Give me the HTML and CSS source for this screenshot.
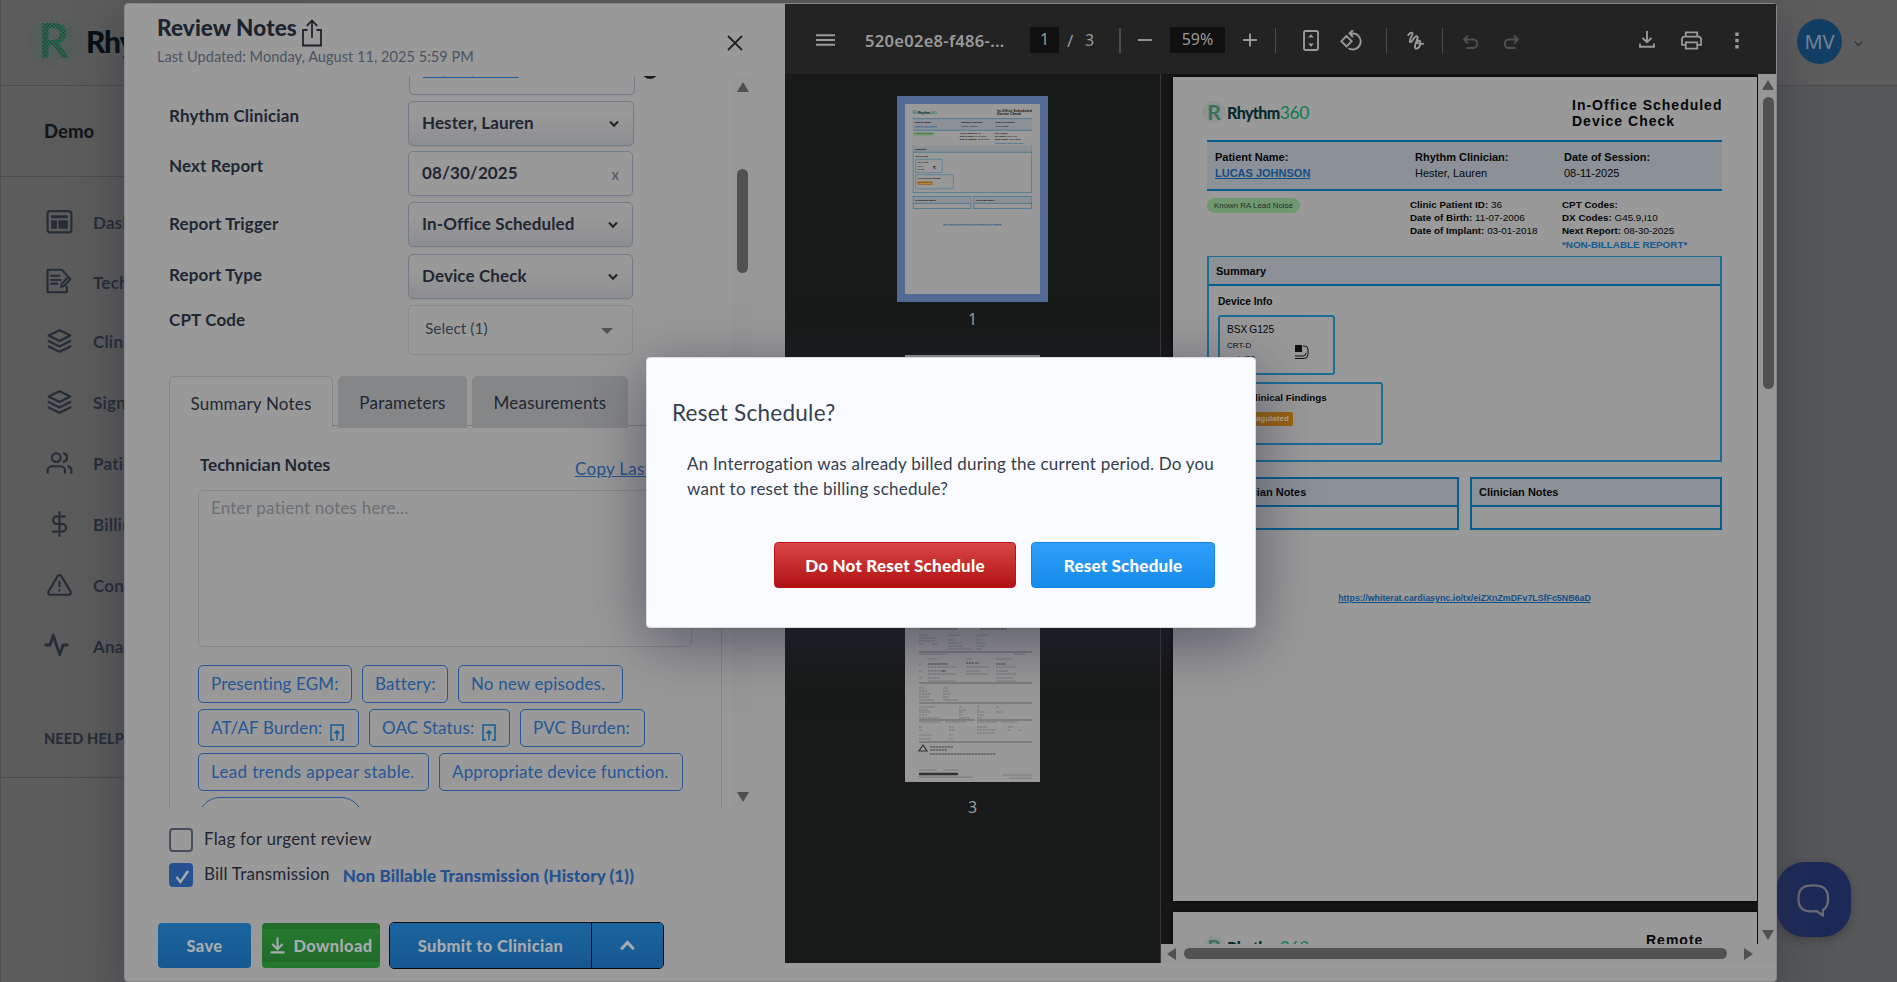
FILE: index.html
```html
<!DOCTYPE html>
<html lang="en">
<head>
<meta charset="utf-8">
<title>Rhythm360 – Review Notes</title>
<link rel="stylesheet" href="styles.css">
</head>
<body>
<svg width="0" height="0" class="defs" aria-hidden="true">
  <defs>
    <pattern id="dotsBig" width="3.6" height="3.6" patternUnits="userSpaceOnUse"><circle cx=".9" cy=".9" r="1.15" fill="#06583a"/><circle cx="2.7" cy="2.7" r="1.15" fill="#06583a"/></pattern>
    <pattern id="dotsSmall" width="4.6" height="4.6" patternUnits="userSpaceOnUse"><circle cx="1.1" cy="1.1" r=".7" fill="#1e5f45"/><circle cx="3.4" cy="3.4" r=".7" fill="#1e5f45"/></pattern>
    <symbol id="mark" viewBox="0 0 54 54">
      <circle cx="27" cy="27" r="26" fill="url(#dotsSmall)" opacity=".75"/>
      <text x="12" y="44" class="mark-r" fill="url(#dotsBig)">R</text>
    </symbol>
    <symbol id="layers" viewBox="0 0 24 24"><path d="M12 2 2 7l10 5 10-5zM2 12l10 5 10-5M2 17l10 5 10-5"/></symbol>
    <symbol id="chev" viewBox="0 0 12 8"><path d="M2 1.5l4 4.2 4-4.2"/></symbol>
    <symbol id="upbox" viewBox="0 0 14 17"><path d="M4 16H1V1h12v15h-3M7 16V7M4.600 9.400 7 7l2.400 2.400"/></symbol>
  </defs>
</svg>

<div class="app">
  <aside class="side">
    <div class="brand"><svg class="brand-mark"><use href="#mark"/></svg><span>Rhythm360</span></div>
    <div class="org">Demo</div>
    <nav class="nav">
      <div class="item"><svg viewBox="0 0 26 24"><rect x="1.500" y="1.500" width="23" height="20.500" rx="2.500"/><path class="solid" d="M5 5.500h16v2.800H5zM5 10.300h5.500v8.200H5zM12 10.300h9v8.200h-9z"/></svg>Dashboard</div>
      <div class="item i2"><svg viewBox="0 0 26 24"><path d="M20 17.500V22.800H1.500V1.200H15l5 5M5 7h8M5 11h9M5 14.500h6M15 15l6.500-7 2 2-6.500 7-2.500.500z"/></svg>Technicians</div>
      <div class="item"><svg viewBox="0 0 24 24"><use href="#layers"/></svg>Clinics</div>
      <div class="item"><svg viewBox="0 0 24 24"><use href="#layers"/></svg>Signed</div>
      <div class="item"><svg viewBox="0 0 24 24"><path d="M17 21v-2a4 4 0 0 0-4-4H5a4 4 0 0 0-4 4v2M23 21v-2a4 4 0 0 0-3-3.870M16 3.130a4 4 0 0 1 0 7.750"/><circle cx="9" cy="7" r="4"/></svg>Patients</div>
      <div class="item"><svg viewBox="0 0 24 24"><path d="M12 1v22M17 5H9.500a3.500 3.500 0 0 0 0 7h5a3.500 3.500 0 0 1 0 7H6"/></svg>Billing</div>
      <div class="item"><svg viewBox="0 0 24 24"><path d="M10.290 3.860 1.820 18a2 2 0 0 0 1.710 3h16.940a2 2 0 0 0 1.710-3L13.710 3.860a2 2 0 0 0-3.420 0zM12 9v4M12 17h.01"/></svg>Connectivity</div>
      <div class="item pulse"><svg viewBox="0 0 24 24"><path d="M22 12h-4l-3 9L9 3l-3 9H2"/></svg>Analytics</div>
    </nav>
    <div class="help">NEED HELP?</div>
  </aside>
  <main class="main">
    <header class="top"><span class="avatar">MV</span><svg class="top-chev" viewBox="0 0 12 8"><use href="#chev"/></svg></header>
  </main>
</div>

<div class="fab"><svg viewBox="0 0 34 34"><path d="M16.500 1.500C27 1.500 32 5 32 15c0 6.500-2 10-5 11.500l-.500 6-6-4.500c-14.500 1-19-3-19-12.500C1.500 5 6 1.500 16.500 1.500z"/></svg></div>

<section class="review">
  <div class="notes">
    <header class="notes-head">
      <div class="headline"><h1>Review Notes</h1><svg viewBox="0 0 20 28"><path d="M5.500 11H1v15.500h18V11h-4.500M10 19V1.500M4.800 6.800 10 1.500l5.200 5.300"/></svg></div>
      <p>Last Updated: Monday, August 11, 2025 5:59 PM</p>
      <svg class="close" viewBox="0 0 16 16"><path d="M1 1l14 14M15 1 1 15"/></svg>
    </header>
    <div class="scroll">
      <div class="form">
        <div class="row r0"><label></label><div class="field"><a>08/11/2025</a></div><span class="dot"></span></div>
        <div class="row r1"><label>Rhythm Clinician</label><div class="field sel">Hester, Lauren<svg><use href="#chev"/></svg></div></div>
        <div class="row r2"><label>Next Report</label><div class="field date">08/30/2025<i>x</i></div></div>
        <div class="row r3"><label>Report Trigger</label><div class="field sel">In-Office Scheduled<svg><use href="#chev"/></svg></div></div>
        <div class="row r4"><label>Report Type</label><div class="field sel dc">Device Check<svg><use href="#chev"/></svg></div></div>
        <div class="row r5"><label>CPT Code</label><div class="field multi">Select (1)<b></b></div></div>
        <div class="tabs"><span class="tab on">Summary Notes</span><span class="tab t2">Parameters</span><span class="tab t3">Measurements</span></div>
        <div class="panel">
          <div class="panel-head"><h2>Technician Notes</h2><a>Copy Last Note</a></div>
          <div class="area">Enter patient notes here...</div>
          <div class="chips"><span style="width:154px">Presenting EGM:</span><span style="width:86px">Battery:</span><span style="width:165px">No new episodes.</span></div>
          <div class="chips"><span style="width:161px">AT/AF Burden:<svg><use href="#upbox"/></svg></span><span style="width:141px">OAC Status:<svg><use href="#upbox"/></svg></span><span style="width:125px">PVC Burden:</span></div>
          <div class="chips"><span class="wide" style="width:231px">Lead trends appear stable.</span><span style="width:244px">Appropriate device function.</span></div>
          <div class="chips"><span class="pill"></span></div>
        </div>
      </div>
      <div class="bar"><i class="up"></i><i class="thumb"></i><i class="down"></i></div>
    </div>
    <footer class="foot">
      <div class="check"><i class="box"></i><span class="flag">Flag for urgent review</span></div>
      <div class="check c2"><i class="box ticked"><svg viewBox="0 0 24 24"><path d="M7.500 14l4 5L19 8"/></svg></i><span class="bill">Bill Transmission</span><a>Non Billable Transmission (History (1))</a></div>
      <div class="actions">
        <button class="btn save">Save</button>
        <button class="btn down"><svg viewBox="0 0 16 17"><path d="M8 0v12M2.500 7 8 12.500 13.500 7M.500 15.800h15"/></svg>Download</button>
        <div class="split"><button class="btn">Submit to Clinician</button><button class="btn more"><svg viewBox="0 0 16 10"><path d="M2 8.500 8 2.200l6 6.300"/></svg></button></div>
      </div>
    </footer>
  </div>

  <div class="pdf">
    <div class="tools">
      <svg class="g ham" viewBox="0 0 20 12"><path d="M0 1h20M0 6h20M0 11h20"/></svg>
      <span class="file">520e02e8-f486-...</span>
      <span class="num pg">1</span><span class="of">/</span><span class="total">3</span>
      <i class="sep s1"></i>
      <svg class="g minus" viewBox="0 0 14 14"><path d="M0 7h14"/></svg>
      <span class="num zoom">59%</span>
      <svg class="g plus" viewBox="0 0 14 14"><path d="M0 7h14M7 .500v13"/></svg>
      <i class="sep s2"></i>
      <svg class="g fit" viewBox="0 0 16 21"><rect x="1" y="1" width="14" height="19" rx="1.500"/><path class="fill" d="M8 4.200l3 3.200H5zM8 16.800l3-3.200H5z"/></svg>
      <svg class="g rot" viewBox="0 0 22 21"><path d="M6.500 6 1.300 11.200l5.200 5.200 5.200-5.200zM8.500 18.300A8 8 0 1 0 12 3.500H9.500M13 0 9.500 3.500 13 7"/></svg>
      <i class="sep s3"></i>
      <svg class="g pen" viewBox="0 0 18 19"><path d="M1 5C1.500 2.500 5 .500 5.600 2.500 6 4.500 1.500 8.500 3 10.800c1.800 2 3.500-5.500 6.500-5.600 2.600.300.200 4.300-.700 6.800-.9 2.500-1.600 5.600.7 5.600 3 0 4.700-5.400 3.600-7.300-1.100-1.300-3.500.3-2.600 1.700.7 1 3 1 6.500.900"/></svg>
      <i class="sep s4"></i>
      <svg class="g undo" viewBox="0 0 16 14"><path d="M5 .500 1 4.500l4 4M1.500 4.500H10a4.200 4.200 0 0 1 0 8.500H3.500"/></svg>
      <svg class="g redo" viewBox="0 0 16 14"><path d="M11 .500l4 4-4 4M14.500 4.500H6A4.200 4.200 0 0 0 6 13h6.500"/></svg>
      <svg class="g save-ic" viewBox="0 0 16 17"><path d="M8 0v11M3.500 7 8 11.300 12.500 7M1 12.500v3.200h14v-3.200"/></svg>
      <svg class="g print" viewBox="0 0 22 19"><path d="M5 5.500V1h12v4.500M5 14H1V8a2.500 2.500 0 0 1 2.500-2.500h15A2.500 2.500 0 0 1 21 8v6h-4M5 11.500h12V18H5z"/></svg>
      <svg class="g dots" viewBox="0 0 4 17"><path class="fill" d="M.300.500h3.400v3.400H.300zM.300 6.800h3.400v3.400H.300zM.300 13.100h3.400v3.400H.300z"/></svg>
    </div>
    <div class="pdf-body">
      <div class="thumbs">
        <div class="th sel-th"><div class="mini" id="mini"></div></div>
        <div class="cap">1</div>
        <div class="th blank"></div>
        <div class="cap hid"></div>
        <div class="th scan">
          <svg viewBox="0 0 135 190">
            <g class="ln b"><path d="M15 37h37M75 37h27"/></g>
            <g class="ln"><path d="M14 43h8M43 43h12M71 43h12M14 46h17M14 49h16M43 48h8M71 48h6M14 52h4M28 52h4M43 51h13M71 51h10M43 54h15M71 54h10M43 57h24M71 57h6"/></g>
            <path class="rule" d="M14 60h113M14 91h113M14 111h113M14 128h56M72 128h55M14 150h113"/>
            <g class="ln"><path d="M14 62h28M109 62h12M24 67h8M61 67h6M91 67h16M14 72h3M91 75h21M23 75h28M61 75h24M14 79h3M23 79h17M61 79h14M91 79h12M23 82h28M61 82h22M91 82h20M14 86h3M23 86h12M91 86h18M23 89h28M91 89h21M14 96h5M38 96h5M14 99h8M38 99h6M14 102h12M38 102h8M14 105h10M38 105h6M14 108h15M38 108h15M14 115h16M54 115h3M72 115h3M91 115h3M14 118h9M54 118h7M72 118h3M14 120h12M54 120h4M72 120h8M91 120h6M14 123h8M54 123h4M72 123h7M14 126h20M54 126h11M72 126h5M14 130h22M41 130h20M72 130h20M96 130h16M14 135h3M44 135h5M72 135h10M103 135h5M14 138h3M44 138h6M72 138h19M103 138h2M114 138h2M14 143h13M44 143h4M14 147h12M44 147h4M72 141h17M14 178h18M38 178h16M14 185h54M98 183h29M104 186h23"/></g>
            <g class="ln b"><path d="M91 72h10M23 72h20M61 71h8M70 71h4M37 79h4M25 155h23M25 158h17M25 162h66"/></g>
            <path class="blob" d="M15 182h37"/>
            <path class="warn" d="M18 153l4 6h-8z"/>
          </svg>
        </div>
        <div class="cap last">3</div>
      </div>
      <div class="viewer">
        <div class="canvas">
          <div class="page" id="page1">
            <div class="pg-top"><div class="pg-logo"><svg><use href="#mark"/></svg><b>Rhythm</b><span>360</span></div><h3>In-Office Scheduled<br>Device Check</h3></div>
            <div class="band"><div>Patient Name:<a>LUCAS JOHNSON</a></div><div>Rhythm Clinician:<span>Hester, Lauren</span></div><div>Date of Session:<span>08-11-2025</span></div></div>
            <div class="meta">
              <div><em>Known RA Lead Noise</em></div>
              <div><p><b>Clinic Patient ID:</b> 36</p><p><b>Date of Birth:</b> 11-07-2006</p><p><b>Date of Implant:</b> 03-01-2018</p></div>
              <div><p><b>CPT Codes:</b></p><p><b>DX Codes:</b> G45.9,I10</p><p><b>Next Report:</b> 08-30-2025</p><p class="nb">*NON-BILLABLE REPORT*</p></div>
            </div>
            <div class="sum">
              <div class="sum-h">Summary</div>
              <div class="sum-b">
                <div class="sub">Device Info</div>
                <div class="card dev"><div><p class="m">BSX G125</p><p>CRT-D</p><p>serial22</p></div><svg viewBox="0 0 14 15"><path class="fill" d="M0 0h7v7H0z"/><path d="M8 1h1.500a3.500 3.500 0 0 1 3.500 3.500v5a4 4 0 0 1-4 4H0M0 11h8a3 3 0 0 0 3-3"/></svg></div>
                <div class="card find"><p>Key Clinical Findings</p><em>Anticoagulated</em></div>
              </div>
            </div>
            <div class="pair"><div><p>Technician Notes</p></div><div><p>Clinician Notes</p></div></div>
            <a class="url">https://whiterat.cardiasync.io/tx/eiZXnZmDFv7LSfFc5NB6aD</a>
          </div>
          <div class="page p2"><div class="pg-top"><div class="pg-logo"><svg><use href="#mark"/></svg><b>Rhythm</b><span>360</span></div><h3>Remote</h3></div></div>
        </div>
        <div class="vbar"><i class="up"></i><i class="thumb"></i><i class="down"></i></div>
        <div class="hbar"><i class="left"></i><i class="thumb"></i><i class="right"></i></div>
      </div>
    </div>
  </div>
</section>

<div class="dialog">
  <h4>Reset Schedule?</h4>
  <p>An Interrogation was already billed during the current period. Do you<br>want to reset the billing schedule?</p>
  <div class="dlg-act"><button class="red">Do Not Reset Schedule</button><button class="blue">Reset Schedule</button></div>
</div>
<script src="thumb.js"></script>
</body>
</html>
```

FILE: styles.css
```css
*{box-sizing:border-box;margin:0;padding:0}
html,body{height:100%}
body{width:1897px;height:982px;overflow:hidden;position:relative;font-family:Lato,"Liberation Sans",sans-serif;font-size:17px;color:#1f2733;background:#57585a}
svg{fill:none;stroke:currentColor;flex:none;display:block}
button{font:inherit;border:0;color:inherit}
i,em{font-style:normal}
.defs{position:absolute}
.mark-r{font:700 48px Lato,sans-serif;stroke:none}
symbol circle,pattern circle{stroke:none}
.fill{fill:currentColor;stroke:none}

/* application shell */
.app{display:grid;grid-template-columns:300px 1fr;height:982px}
.side{background:#5c5c5c;border-left:1px solid #4c4c4c;display:flex;flex-direction:column}
.brand{height:86px;border-bottom:1px solid #4b4c4e;display:flex;align-items:center;padding:0 0 4px 25px;font-size:30px;font-weight:900;color:#020d14;gap:6px;letter-spacing:-1.200px}
.brand-mark{width:54px;height:54px}
.org{height:91px;border-bottom:1px solid #4b4c4e;padding-left:43px;line-height:90px;font-size:18.500px;font-weight:900;color:#12171e}
.nav{padding-top:15px;height:561px}
.item{height:61px;display:flex;align-items:center;gap:20px;padding-left:45px;color:#262d37;font-weight:700;font-size:17px;letter-spacing:.2px}
.item svg{width:27px;height:26px;stroke-width:2;stroke-linecap:round;stroke-linejoin:round;margin-bottom:2px}
.item .solid{fill:currentColor;stroke:none}
.item.i2{height:58px}
.item.pulse svg{margin:0 3px 4px -3px;stroke-width:2.600}
.help{border-bottom:1px solid #4b4c4e;padding-left:43px;font-weight:900;font-size:14.500px;color:#262d37;line-height:1;margin-top:-6px;white-space:nowrap;height:46px;letter-spacing:.15px}
.main{background:#57585a}
.top{height:86px;background:#5d5d5d;border-bottom:1px solid #4b4c4e;display:flex;justify-content:flex-end;align-items:center;padding:0 33px 2px 0;gap:11px;color:#2a3038}
.avatar{width:45px;height:45px;border-radius:50%;background:#123f66;color:#778596;font:20px/45px "Noto Sans",sans-serif;text-align:center}
.top-chev{width:11px;height:8px;stroke-width:1.300;margin-top:5px}
.fab{position:absolute;left:1776px;top:862px;width:75px;height:75px;border-radius:29px;background:#1d2a59;color:#6b6d72;display:grid;place-items:center;box-shadow:0 3px 10px rgba(0,0,0,.25)}
.fab svg{width:33px;height:33px;stroke-width:2.400;margin-top:2px}

/* review window */
.review{position:absolute;left:124px;top:3px;width:1653px;height:979px;border:1px solid #868789;border-radius:4px;background:#999;display:flex;box-shadow:0 15px 50px rgba(42,46,60,.500)}
.notes{width:660px;display:flex;flex-direction:column}
.notes-head{height:72px;padding:6px 0 0 32px;position:relative}
.headline{display:flex;height:32px;gap:5px}
h1{font-size:22.500px;line-height:36px;font-weight:900;letter-spacing:.1px;color:#1c2430}
.headline svg{width:20px;height:28px;stroke-width:1.800;color:#20242a;margin-top:9px}
.notes-head p{font-size:14.500px;line-height:22px;color:#4b5463;letter-spacing:.05px;margin-top:4px}
.close{position:absolute;right:42px;top:31px;width:16px;height:16px;stroke-width:1.800;color:#222}
.scroll{height:731px;display:flex;overflow:hidden;padding-left:44px}
.form{width:553px;flex:none}
.row{display:flex;height:51px;overflow:visible}
.row label{width:239px;line-height:20px;font-weight:700;letter-spacing:.15px}
.field{width:225px;height:45px;border:1px solid #747b89;border-radius:5px;padding:0 13px;font-weight:700;display:flex;justify-content:space-between;line-height:41px;box-shadow:0 1px 2px rgba(0,0,0,.06);letter-spacing:.1px;white-space:nowrap}
.r1 .field,.r0 .field{width:226px}
.field svg{width:12px;height:8px;stroke-width:2;margin-top:18px;color:#222}
.sel{background:linear-gradient(#999 30%,#8d8e91)}
.r0{height:25px}
.r0 .field{margin-top:-26px;line-height:44px;color:#1f5c9c;margin-left:1px;font-weight:400}
.r0 .field a{text-decoration:underline;font-weight:700;margin-top:-3px}
.dot{width:16px;height:16px;border-radius:50%;background:#1d1f22;margin:-13px 0 0 7px}
.r1{height:50px}.r1 label,.r2 label,.r5 label{margin-top:5px}
.r3{height:52px}.r3 label{margin-top:12px}.r4 label{margin-top:11px}
.date i{font-size:15px;font-weight:400;color:#4a5361;line-height:44px}
.r5{height:71px}
.multi{height:50px;border-color:#8a8a8c;font-weight:400;padding:0 19px 0 16px;line-height:45px;color:#333c4a;font-size:15.500px;letter-spacing:0;box-shadow:none}
.multi b{width:0;height:0;border:6px solid transparent;border-top-color:#505357;border-bottom:0;margin-top:22px}
.tabs{height:52px;display:flex;gap:5px;background:linear-gradient(#7d7e81,#7d7e81) 0 49px/100% 1px no-repeat;font-weight:400;line-height:53px;text-align:center;letter-spacing:.2px}
.tab{background:#858688;border-radius:5px 5px 0 0;width:129px}
.tab.on{width:164px;background:#999;border:1px solid #858688;border-bottom:0}
.t3{width:156px}
.panel{border:1px solid #858688;border-width:0 1px;padding-left:28px;height:400px}
.panel-head{height:62px;display:flex;justify-content:space-between;padding:26px 0 0 2px;width:500px}
h2{font:600 16.500px/22px "Noto Sans",sans-serif;letter-spacing:-.45px}
.panel-head a{color:#24528c;text-decoration:underline;line-height:30px;width:123px;white-space:nowrap;letter-spacing:.3px}
.area{width:494px;height:157px;border:1px solid #868688;border-radius:5px;padding:7px 12px;color:#6c6f73;line-height:20px;margin-bottom:18px;font-size:17px;letter-spacing:.2px}
.chips{display:flex;gap:10px;height:38px;margin-bottom:6px}
.chips span{height:38px;border:1px solid #265796;border-radius:5px;color:#265796;padding-left:12px;line-height:35px;white-space:nowrap;display:flex;gap:8px;letter-spacing:.15px}
.chips .wide{letter-spacing:.35px}
.chips svg{width:14px;height:17px;stroke-width:1.500;margin-top:14px;color:#0f5f95}
.chips .pill{width:165px;border-radius:22px;height:44px}
.bar{width:19px;margin-left:11px;background:#979797;display:flex;flex-direction:column;align-items:center}
.up,.down,.left,.right{width:0;height:0;border:6px solid transparent;flex:none}
.up{border-bottom:10px solid #505050;border-top:0}
.bar .up{margin-top:6px}
.thumb{background:#515151;border-radius:6px}
.bar .thumb{width:11px;height:104px;margin-top:77px}
i.down{border-top:10px solid #505050;border-bottom:0}
.bar .down{margin-top:519px}
.foot{padding:21px 0 0 33px}
.check{display:flex;height:35px;padding-left:11px;line-height:22px;letter-spacing:.2px}
.box{width:24px;height:24px;border:2px solid #454e5a;border-radius:4px;margin-right:11px}
.ticked{background:#265190;border:0;color:#a9abad}
.ticked svg{stroke-width:2.400}
.check a{color:#265190;font-weight:900;margin-left:13px;line-height:26px;letter-spacing:.1px}
.actions{display:flex;margin-top:24px;height:47px;align-items:center}
.btn{height:45px;border-radius:4px;background:linear-gradient(#1c659e,#145891);color:#a8abae;font-weight:900;font-size:16.500px;text-align:center;letter-spacing:.35px}
.save{width:93px;margin-right:11px}
button.down{width:118px;margin-right:9px;background:linear-gradient(#257a2f,#216a29);display:flex;align-items:center;justify-content:center;gap:9px}
.btn svg{width:15px;height:17px;stroke-width:2.200}
.split{display:flex;border:1px solid #070a10;border-radius:5px;height:47px}
.split .btn{width:201px;border-radius:4px 0 0 4px}
.split .more{width:72px;border-left:1px solid #070a10;border-radius:0 4px 4px 0;display:grid;place-items:center}
.more svg{width:17px;height:11px;stroke-width:2.800}

/* document viewer */
.pdf{width:991px;height:959px;display:flex;flex-direction:column;color:#999}
.tools{height:70px;background:#232323;display:flex;align-items:center;padding:2px 0 0 31px;font:17px "Noto Sans",sans-serif;overflow:hidden}
.g{stroke-width:1.900}
.ham{width:19px;height:12px}
.file{margin-left:30px;width:140px;font-weight:600;font-size:16.500px;white-space:nowrap;letter-spacing:.3px}
.num{background:#101010;height:26px;line-height:25px;text-align:center;font-size:16px}
.pg{width:29px;margin-left:25px}.of{margin-left:8px;width:8px}.total{margin-left:10px;width:10px;font-size:16px}
.sep{width:1px;height:25px;background:#4b4b4b}
.s1{margin-left:24px;width:2px}.minus{width:14px;margin-left:17px}.zoom{width:55px;margin-left:18px}.plus{width:14px;margin-left:18px}
.s2{margin-left:18px}.fit{width:16px;height:21px;margin-left:27px}.rot{width:22px;height:21px;margin-left:21px}
.s3{margin-left:24px}.pen{width:18px;height:19px;margin-left:20px}.s4{margin-left:17px}
.undo{width:16px;height:14px;margin-left:20px;color:#505050;margin-top:3px}.redo{width:16px;height:14px;margin-left:24px;color:#505050;margin-top:3px}
.save-ic{width:16px;height:17px;margin-left:120px;margin-top:-2px}.print{width:21px;height:19px;margin-left:26px}.dots{width:4px;height:17px;margin-left:33px}
.pdf-body{display:flex;height:889px}
.thumbs{width:376px;background:#181a19;border-right:1px solid #373838;padding-top:22px;display:flex;flex-direction:column;align-items:center}
.th{width:135px;height:190px;background:#999;flex:none;overflow:hidden}
.sel-th{width:151px;height:206px;border:8px solid #536a94}
.mini{width:584px;height:824px;transform:scale(.2312);transform-origin:0 0}
.cap{font:16px/22px "Noto Sans",sans-serif;height:22px;margin-top:6px;flex:none}
.cap.last{margin-top:14px}
.blank{margin-top:25px}
.cap.hid{margin-bottom:19px}
.scan{color:#55565a}
.scan svg{width:135px;height:190px;stroke-width:1}
.ln{stroke-dasharray:2.500 .5;opacity:.5}.ln.b{opacity:.9;stroke:#3a3b3e}.rule{stroke-width:.8}.blob{stroke:#333;stroke-width:2.500;stroke-linecap:round}.warn{stroke:#333;stroke-width:1.200}
.viewer{width:615px;display:grid;grid-template:870px 19px/597px 18px;background:#999}
.canvas{background:#161616;padding:3px 0 0 12px;overflow:hidden}
.page{width:584px;height:824px;background:#999;padding:0 35px 0 34px;font-family:"Liberation Sans",Arial,sans-serif;color:#060708;box-shadow:0 0 4px #000}
.pg-top{height:63px;display:flex;justify-content:space-between;padding-top:20px}
.pg-logo{display:flex;height:30px;align-items:center;font:17.500px Lato,sans-serif;color:#0d7b50;margin-left:-5px;letter-spacing:-.3px}
.pg-logo svg{width:24px;height:24px;margin-right:1px}
.pg-logo b{color:#082a2b;font-weight:900;font-size:16px;letter-spacing:-.6px}
h3{font-size:14px;line-height:16px;letter-spacing:1px;width:150px;white-space:nowrap}
.band{height:51px;border:2px solid #075d8b;border-width:2px 0;background:#8b9196;display:grid;grid-template-columns:200px 149px 1fr;padding:7px 0 0 8px;font-weight:700;font-size:11px;line-height:16px}
.band>div>*{display:block}
.band span{font-weight:400}
.band a{color:#124f87;text-decoration:underline}
.meta{display:grid;grid-template-columns:203px 152px 1fr;height:65px;font-size:9.850px;line-height:13px;padding-top:7px;white-space:nowrap}
.meta em{display:inline-block;background:#6f9870;border-radius:8px;height:15px;line-height:15px;padding:0 7px;font-size:7.900px;color:#20302a}
.meta .nb{color:#125a92;font-weight:700;padding-top:1px}
.sum{border:2px solid #1c6c94;height:206px;border-top-width:1px}
.sum-h{height:29px;border-bottom:2px solid #075d8b;background:#8b9196;font-weight:700;font-size:11px;line-height:28px;padding-left:7px}
.sum-b{padding:8px 0 0 9px}
.sub{font-size:10.200px;font-weight:700;line-height:15px;height:21px}
.card{border:2px solid #1c6c94;border-radius:3px}
.dev{width:117px;height:60px;padding:6px 24px 0 7px;display:flex;justify-content:space-between;font-size:8px}
.dev p{line-height:12px;height:13px;white-space:nowrap}.dev .m{font-size:10.200px;line-height:13px;height:17px;word-spacing:-1px}
.dev svg{width:14px;height:15px;margin-top:22px;color:#111}
.find{width:165px;height:63px;margin-top:7px;padding:7px;font-size:9.900px;font-weight:700}
.find p{line-height:14px;height:21px}
.find em{display:block;width:66px;height:14px;background:#99620f;border-radius:2px;color:#b9a98e;font-size:8px;line-height:14px;padding-left:4px;white-space:nowrap}
.pair{display:flex;gap:11px;margin-top:15px;height:53px}
.pair div{flex:1;border:2px solid #075d8b}
.pair p{height:28px;background:#8b9196;border-bottom:2px solid #075d8b;font-weight:700;font-size:11px;line-height:26px;padding-left:7px}
.url{display:block;text-align:center;font-size:8.850px;font-weight:700;color:#124f87;text-decoration:underline;line-height:12px;margin-top:62px}
.p2{margin-top:11px;height:200px}
.p2 h3{width:76px}
.vbar{display:flex;flex-direction:column;align-items:center;background:#979797;padding-left:2px}
.vbar .up{margin-top:6px}.vbar .thumb{width:11px;height:292px;margin-top:7px}.vbar .down{margin-top:541px}
.hbar{grid-column:1/3;display:flex;align-items:center;background:#979797}
.left{border-right:9px solid #505050;border-left:0}.right{border-left:9px solid #505050;border-right:0}
.hbar .left{margin-left:6px}.hbar .thumb{width:543px;height:11px;margin:0 17px 0 8px}

/* confirmation dialog */
.dialog{position:absolute;left:646px;top:357px;width:610px;height:271px;background:#fafbfe;border:1px solid #d8dce4;border-radius:4px;padding:38px 40px 0 25px;box-shadow:0 15px 60px rgba(36,38,62,.550);color:#35404f}
h4{font-size:22.500px;font-weight:400;line-height:34px;letter-spacing:.25px}
.dialog p{font-size:17px;line-height:25px;padding:21px 0 0 15px;white-space:nowrap;height:108px;letter-spacing:.22px}
.dlg-act{display:flex;justify-content:flex-end;gap:15px;margin-top:4px}
.dlg-act button{height:46px;border-radius:4px;color:#fff;font-weight:900;font-size:17px;letter-spacing:.2px}
.red{width:242px;border:1px solid #c01020;background:linear-gradient(#da4646,#b01212)}
.blue{width:184px;border:1px solid #1583de;background:linear-gradient(#2f9ffa,#178bea)}
```

FILE: thumb.js
```js
// Fill the first thumbnail with a scaled copy of the open page.
const copy = document.getElementById('page1').cloneNode(true);
copy.removeAttribute('id');
document.getElementById('mini').appendChild(copy);
```
